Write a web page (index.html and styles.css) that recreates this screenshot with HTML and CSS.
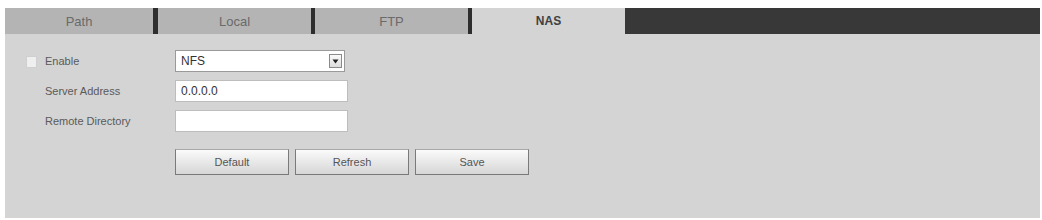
FILE: index.html
```html
<!DOCTYPE html>
<html>
<head>
<meta charset="utf-8">
<link rel="stylesheet" href="styles.css">
</head>
<body>
<div class="page">
  <div class="tabs">
    <div class="tab first">Path</div>
    <div class="sep"></div>
    <div class="tab">Local</div>
    <div class="sep thin"></div>
    <div class="tab">FTP</div>
    <div class="sep thin"></div>
    <div class="tab active">NAS</div>
    <div class="tab-fill"></div>
  </div>
  <div class="content">
    <div class="row">
      <div class="label check-label"><span class="checkbox"></span>Enable</div>
      <div class="select"><span class="select-text">NFS</span><span class="select-btn"><svg width="7" height="5" viewBox="0 0 7 5"><path d="M0.5 0.5 L6.5 0.5 L3.5 4.5 Z" fill="#222"/></svg></span></div>
    </div>
    <div class="row">
      <div class="label">Server Address</div>
      <div class="input">0.0.0.0</div>
    </div>
    <div class="row">
      <div class="label">Remote Directory</div>
      <div class="input"></div>
    </div>
    <div class="buttons">
      <div class="btn">Default</div>
      <div class="btn">Refresh</div>
      <div class="btn">Save</div>
    </div>
  </div>
</div>
</body>
</html>
```
FILE: styles.css
```css
html, body {
  margin: 0;
  padding: 0;
  background: #ffffff;
}
body {
  font-family: "Liberation Sans", Arial, sans-serif;
}
.page {
  padding: 8px 2px 0 5px;
  width: 1035px;
}
.tabs {
  display: flex;
  height: 26px;
}
.tab {
  width: 153px;
  background: #b4b4b4;
  color: #6a6a6a;
  font-size: 13px;
  display: flex;
  align-items: center;
  justify-content: center;
}
.tab.first {
  width: 148px;
}
.tab.active {
  background: #d4d4d4;
  color: #404040;
  font-size: 12px;
  font-weight: bold;
}
.sep {
  width: 5px;
  background: #2e2e2e;
}
.sep.thin {
  width: 4px;
}
.tab-fill {
  flex: 1;
  background: #383838;
}
.content {
  background: #d4d4d4;
  height: 184px;
  padding-top: 16px;
  box-sizing: border-box;
}
.row {
  display: flex;
  align-items: center;
  height: 22px;
  margin-bottom: 8px;
}
.label {
  width: 130px;
  padding-left: 40px;
  font-size: 11px;
  color: #5a5a5a;
}
.check-label {
  position: relative;
}
.checkbox {
  position: absolute;
  left: 21px;
  top: 1px;
  width: 9px;
  height: 10px;
  background: #efefef;
  border: 1px solid #cfcfcf;
}
.select {
  width: 168px;
  height: 20px;
  border: 1px solid #9a9a9a;
  background: #ffffff;
  display: flex;
  align-items: center;
  justify-content: space-between;
  box-sizing: content-box;
}
.select-text {
  padding-left: 5px;
  font-size: 12px;
  color: #333;
}
.select-btn {
  width: 11px;
  height: 12px;
  margin-right: 2px;
  border: 1px solid #8a8a8a;
  background: linear-gradient(#fafafa, #dcdcdc);
  display: flex;
  align-items: center;
  justify-content: center;
}
.input {
  width: 173px;
  height: 22px;
  border: 1px solid #bdbdbd;
  background: #ffffff;
  font-size: 12px;
  color: #333;
  line-height: 20px;
  padding-left: 5px;
  box-sizing: border-box;
}
.buttons {
  display: flex;
  gap: 6px;
  padding-left: 170px;
  margin-top: 17px;
}
.btn {
  width: 114px;
  height: 26px;
  box-sizing: border-box;
  border: 1px solid #7a7a7a;
  border-top-color: #a8a8a8;
  background: linear-gradient(#fbfbfb, #e8e8e8 50%, #d6d6d6);
  color: #555;
  font-size: 11px;
  display: flex;
  align-items: center;
  justify-content: center;
}
```
